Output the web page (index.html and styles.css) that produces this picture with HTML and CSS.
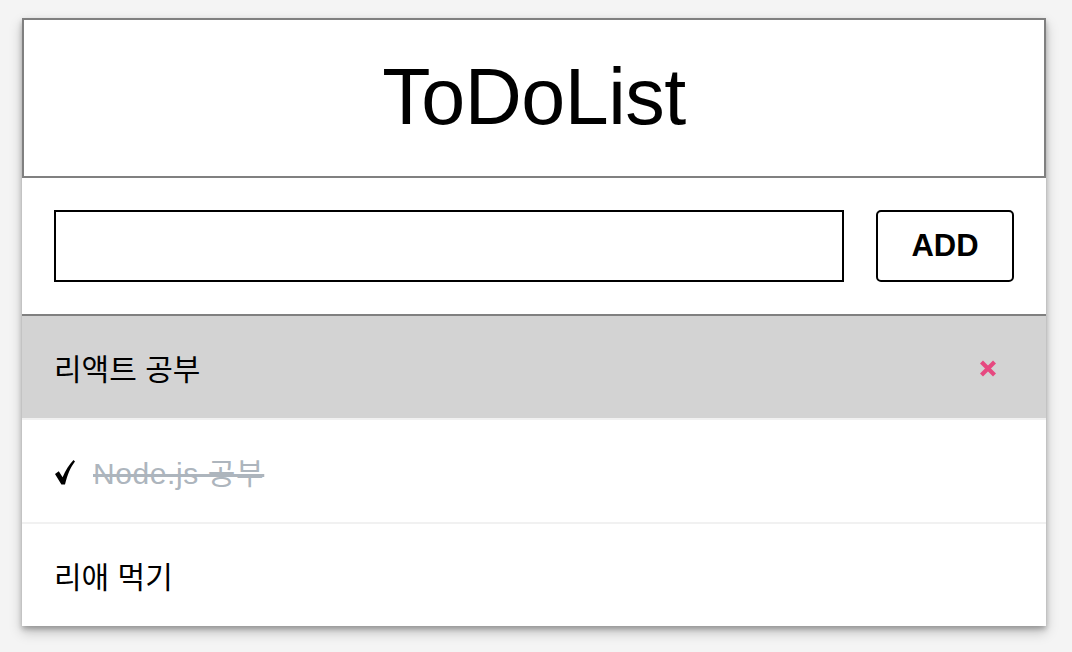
FILE: index.html
```html
<!DOCTYPE html>
<html lang="ko">
<head>
<meta charset="utf-8">
<title>ToDoList</title>
<link rel="stylesheet" href="styles.css">
</head>
<body>
<main class="todo">
  <header class="todo-header">ToDoList</header>
  <form class="todo-form">
    <input class="todo-input" type="text">
    <button class="todo-add" type="button">ADD</button>
  </form>
  <ul class="todo-list">
    <li class="todo-item is-hover">
      <span class="todo-text">리액트 공부</span>
      <svg class="todo-remove" width="18" height="17" viewBox="0 0 18 17"><path d="M2.5 2 L15.5 15 M15.5 2 L2.5 15" stroke="#e64980" stroke-width="4.2" stroke-linecap="butt"/></svg>
    </li>
    <li class="todo-item">
      <svg class="todo-check" width="20" height="25" viewBox="0 0 20 25"><path d="M0 14 L3.8 11.2 L7.6 17.2 C10.6 10.2 14 4.8 18.5 0 L20 1.4 C15.7 7 12.4 14 10 24.6 L6.4 24.6 Z" fill="#000"/></svg>
      <span class="todo-text is-done">Node.js 공부</span>
    </li>
    <li class="todo-item">
      <span class="todo-text">리애 먹기</span>
    </li>
  </ul>
</main>
</body>
</html>
```
FILE: styles.css
```css
html, body {
  margin: 0;
  padding: 0;
  background: #f4f4f4;
}

body {
  padding: 18px 0 40px;
  font-family: "Liberation Sans", "Noto Sans CJK KR", sans-serif;
}

.todo {
  width: 1024px;
  margin-left: 22px;
  background: #fff;
  box-shadow: 0 3px 5px rgba(0, 0, 0, 0.25), 0 6px 12px rgba(0, 0, 0, 0.22);
}

.todo-header {
  box-sizing: border-box;
  height: 160px;
  border: 2px solid #808080;
  display: flex;
  align-items: center;
  justify-content: center;
  font-size: 79px;
  font-weight: 400;
  color: #000;
  letter-spacing: -0.5px;
  padding-bottom: 2px;
}

.todo-form {
  display: flex;
  gap: 32px;
  padding: 32px;
  margin: 0;
  border-bottom: 2px solid #808080;
}

.todo-input {
  flex: 1;
  box-sizing: border-box;
  height: 72px;
  border: 2px solid #000;
  border-radius: 0;
  margin: 0;
  padding: 0 12px;
  font-size: 28px;
  outline: none;
  background: #fff;
}

.todo-add {
  box-sizing: border-box;
  width: 138px;
  height: 72px;
  margin: 0;
  border: 2px solid #000;
  border-radius: 5px;
  background: #fff;
  color: #000;
  font-family: "Liberation Sans", sans-serif;
  font-size: 31px;
  font-weight: 700;
  padding: 0;
}

.todo-list {
  list-style: none;
  margin: 0;
  padding: 0;
}

.todo-item {
  display: flex;
  align-items: center;
  height: 102px;
  padding: 0 49px 0 32px;
  border-bottom: 2px solid #f1f1f1;
  font-size: 30px;
  color: #000;
}

.todo-item:last-child {
  border-bottom: none;
}

.todo-item.is-hover {
  background: #d3d3d3;
}

.todo-text {
  flex: 1;
}

.todo-text.is-done {
  color: #adb5bd;
  text-decoration: line-through;
  letter-spacing: 0.6px;
}

.todo-check {
  margin-left: 1px;
  margin-right: 18px;
  margin-top: 2px;
}

.todo-remove {
  display: block;
  margin-top: 2px;
}
```
